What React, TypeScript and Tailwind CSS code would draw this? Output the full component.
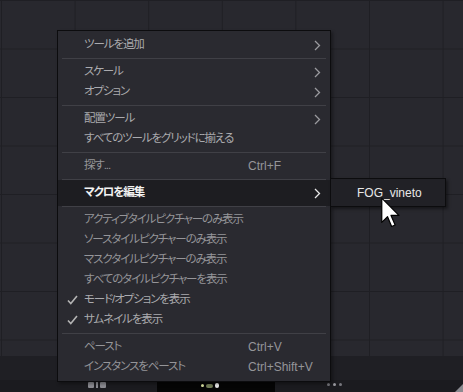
import React from 'react';

type Item =
  | { kind: 'sep' }
  | {
      kind: 'item';
      label: string;
      shortcut?: string;
      sub?: boolean;
      checked?: boolean;
      dim?: boolean;
      active?: boolean;
    };

const items: Item[] = [
  { kind: 'item', label: 'ツールを追加', sub: true },
  { kind: 'sep' },
  { kind: 'item', label: 'スケール', sub: true },
  { kind: 'item', label: 'オプション', sub: true },
  { kind: 'sep' },
  { kind: 'item', label: '配置ツール', sub: true },
  { kind: 'item', label: 'すべてのツールをグリッドに揃える' },
  { kind: 'sep' },
  { kind: 'item', label: '探す...', shortcut: 'Ctrl+F', dim: true },
  { kind: 'sep' },
  { kind: 'item', label: 'マクロを編集', sub: true, active: true },
  { kind: 'sep' },
  { kind: 'item', label: 'アクティブタイルピクチャーのみ表示', dim: true },
  { kind: 'item', label: 'ソースタイルピクチャーのみ表示', dim: true },
  { kind: 'item', label: 'マスクタイルピクチャーのみ表示', dim: true },
  { kind: 'item', label: 'すべてのタイルピクチャーを表示', dim: true },
  { kind: 'item', label: 'モード/オプションを表示', checked: true },
  { kind: 'item', label: 'サムネイルを表示', checked: true },
  { kind: 'sep' },
  { kind: 'item', label: 'ペースト', shortcut: 'Ctrl+V', dim: true },
  { kind: 'item', label: 'インスタンスをペースト', shortcut: 'Ctrl+Shift+V', dim: true },
];

const Chevron = ({ color }: { color: string }) => (
  <svg width="7" height="11" viewBox="0 0 7 11" fill="none">
    <path d="M1 1 L5.5 5.5 L1 10" stroke={color} strokeWidth="1.3" />
  </svg>
);

const Check = () => (
  <svg width="11" height="10" viewBox="0 0 11 10" fill="none">
    <path d="M1 5.5 L3.8 8.6 L10 1" stroke="#b4b4b4" strokeWidth="1.6" />
  </svg>
);

const Cursor = () => (
  <svg width="19" height="31" viewBox="0 0 12.5 20" className="absolute left-[381px] top-[197px]">
    <path
      d="M0.5 0.5 L0.5 16.5 L4.3 12.8 L7 19.2 L9.3 18.2 L6.6 11.9 L11.8 11.9 Z"
      fill="#ffffff"
      stroke="#000000"
      strokeWidth="0.8"
      strokeLinejoin="round"
    />
  </svg>
);

const MenuRow = ({ item }: { item: Extract<Item, { kind: 'item' }> }) => {
  const color = item.active ? 'text-[#f2f2f2] font-bold' : item.dim ? 'text-[#959599]' : 'text-[#aaaaae]';
  return (
    <div
      className={`relative flex h-[20px] items-center pl-[26px] ${
        item.active ? '-my-[3px] h-[26px] bg-[#1d1d21]' : ''
      } ${color}`}
    >
      {item.checked && (
        <span className="absolute left-[9px] top-[5px]">
          <Check />
        </span>
      )}
      <span className="flex-1 whitespace-nowrap text-[11.5px] leading-none tracking-[-1.1px]">{item.label}</span>
      <span className="w-[66px] whitespace-nowrap text-[12px] leading-none">{item.shortcut ?? ''}</span>
      <span className="flex w-[16px] items-center">
        {item.sub && <Chevron color={item.active ? '#e8e8e8' : '#9a9a9e'} />}
      </span>
    </div>
  );
};

export default function App() {
  return (
    <div className="relative flex h-[392px] w-[463px] flex-col overflow-hidden bg-[#27272d] font-['Liberation_Sans','Noto_Sans_CJK_JP',sans-serif] [font-feature-settings:'palt'_1]">
      {/* node canvas grid */}
      <div className="h-[356px] bg-[#28282e] bg-[linear-gradient(to_right,#1f1f24_1px,transparent_1px),linear-gradient(to_bottom,#1f1f24_1px,transparent_1px)] [background-position:1px_0px] [background-size:73.6px_48.5px]" />

      {/* bottom strip */}
      <div className="h-[24px] bg-[#1f1f24]" />
      <div className="flex h-[12px] items-start bg-[#1b1b1f]">
        <div className="ml-[88px] mt-[2px] flex w-[18px] gap-[2px]">
          <div className="h-[6px] w-[6px] rounded-[1px] bg-[#8a8a90]" />
          <div className="mt-[-2px] h-[8px] w-[2px] bg-[#8a8a90]" />
          <div className="h-[6px] w-[6px] rounded-[1px] bg-[#8a8a90]" />
        </div>
        <div className="ml-[51px] flex h-[12px] w-[118px] items-start justify-center bg-[#050505] pt-[3px]">
          <div className="flex items-center gap-[2px] pr-[12px]">
            <span className="h-[3px] w-[3px] rounded-full bg-[#d8e0a0]" />
            <span className="h-[4px] w-[7px] rounded-[2px] bg-[#6f7a55]" />
            <span className="h-[5px] w-[4px] rounded-full bg-[#e6e6e6]" />
          </div>
        </div>
        <div className="ml-[52px] mt-[3px] flex gap-[3px]">
          <span className="h-[3px] w-[3px] rounded-full bg-[#77777d]" />
          <span className="h-[3px] w-[3px] rounded-full bg-[#9a9aa0]" />
          <span className="h-[3px] w-[3px] rounded-full bg-[#77777d]" />
        </div>
        <div className="ml-auto mt-[4px] h-[8px] w-[8px] bg-[#8a8a90] [clip-path:polygon(100%_0,100%_100%,0_100%)]" />
      </div>

      {/* context menu */}
      <div className="absolute left-[57px] top-[30px] w-[274px] border border-[#0c0c0e] bg-[#2a2a30] py-[4px] shadow-[2px_2px_3px_rgba(0,0,0,0.35)]">
        {items.map((it, i) =>
          it.kind === 'sep' ? (
            <div key={i} className="px-[4px] py-[3px]">
              <div className="h-px bg-[#404046]" />
            </div>
          ) : (
            <MenuRow key={i} item={it} />
          )
        )}
      </div>

      {/* submenu */}
      <div className="absolute left-[330px] top-[178px] flex h-[29px] w-[116px] items-center border border-[#0c0c0e] bg-[#212126] pl-[26px] shadow-[2px_2px_3px_rgba(0,0,0,0.45)]">
        <span className="text-[12px] leading-none text-[#e8e8e8]">FOG_vineto</span>
      </div>

      <Cursor />
    </div>
  );
}
